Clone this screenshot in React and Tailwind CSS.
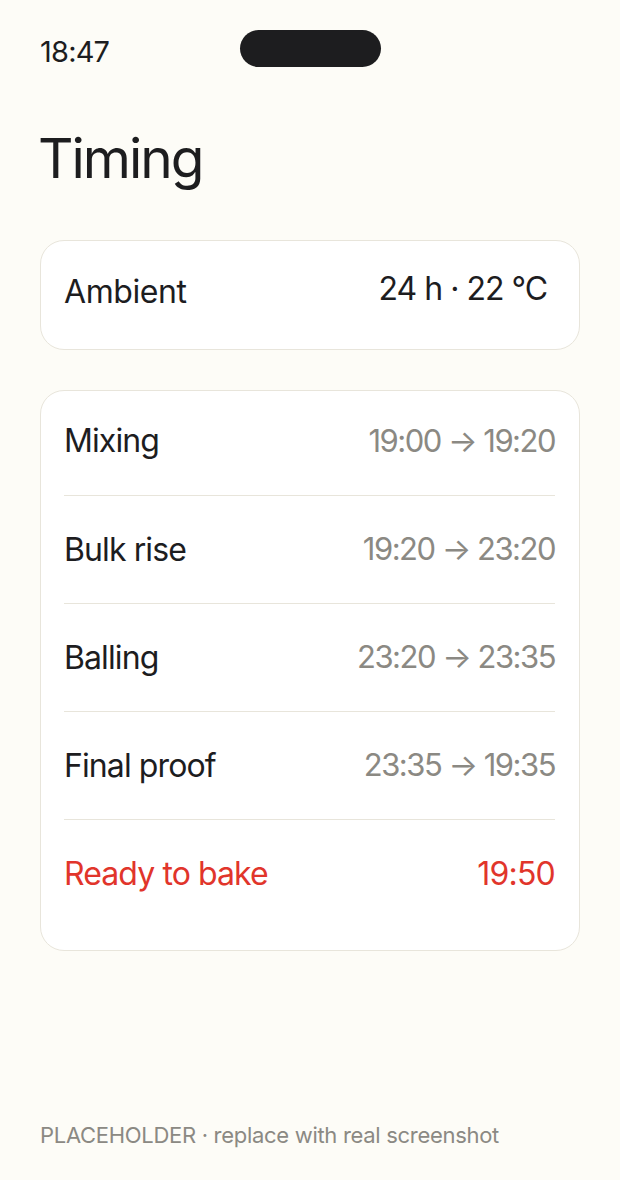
const STEPS = [
  { name: 'Mixing', time: '19:00 → 19:20' },
  { name: 'Bulk rise', time: '19:20 → 23:20' },
  { name: 'Balling', time: '23:20 → 23:35' },
  { name: 'Final proof', time: '23:35 → 19:35' },
];

export default function App() {
  return (
    <div className="min-h-[1180px] bg-[#fdfcf7] px-10 pt-[30px] font-['Inter',sans-serif] text-[#1d1d1f]">
      {/* status bar */}
      <div className="grid h-[37px] grid-cols-[1fr_141px_1fr] items-center">
        <span className="pt-[6px] text-[29px] leading-none tracking-[-0.8px]">18:47</span>
        <div className="h-[37px] w-[141px] rounded-full bg-[#1d1d1f]" />
        <span />
      </div>

      <h1 className="-ml-[2px] mt-[63px] text-[55px] font-normal leading-[56px] tracking-[-2px]">Timing</h1>

      <div className="mt-[54px] flex h-[110px] items-center justify-between rounded-[24px] border border-[#e8e5db] bg-white pl-[23px] pr-8">
        <span className="mb-[6px] text-[32px] tracking-[-0.4px]">Ambient</span>
        <span className="mb-[12px] text-[32px] tracking-[-1px]">24 h · 22 °C</span>
      </div>

      <div className="mt-[40px] rounded-[24px] border border-[#e8e5db] bg-white pb-[22px] pl-[23px] pr-6">
        {STEPS.map((s, i) => (
          <div
            key={s.name}
            className={`flex items-center justify-between border-b border-[#e8e5db] ${i === 0 ? 'h-[105px]' : 'h-[108px]'}`}
          >
            <span className={`text-[32px] tracking-[-0.9px] ${i === 0 ? 'mb-[4px]' : ''}`}>{s.name}</span>
            <span className={`text-[31px] tracking-[-1.5px] text-[#8b8983] ${i === 0 ? 'mb-[4px]' : ''}`}>{s.time}</span>
          </div>
        ))}
        <div className="flex h-[108px] items-center justify-between text-[#e1352b]">
          <span className="text-[32px] tracking-[-0.9px]">Ready to bake</span>
          <span className="text-[32px] tracking-[-0.8px]">19:50</span>
        </div>
      </div>

      <p className="mt-[168px] text-[22px] tracking-[-0.3px] text-[#8b8983]">
        PLACEHOLDER · replace with real screenshot
      </p>
    </div>
  );
}
